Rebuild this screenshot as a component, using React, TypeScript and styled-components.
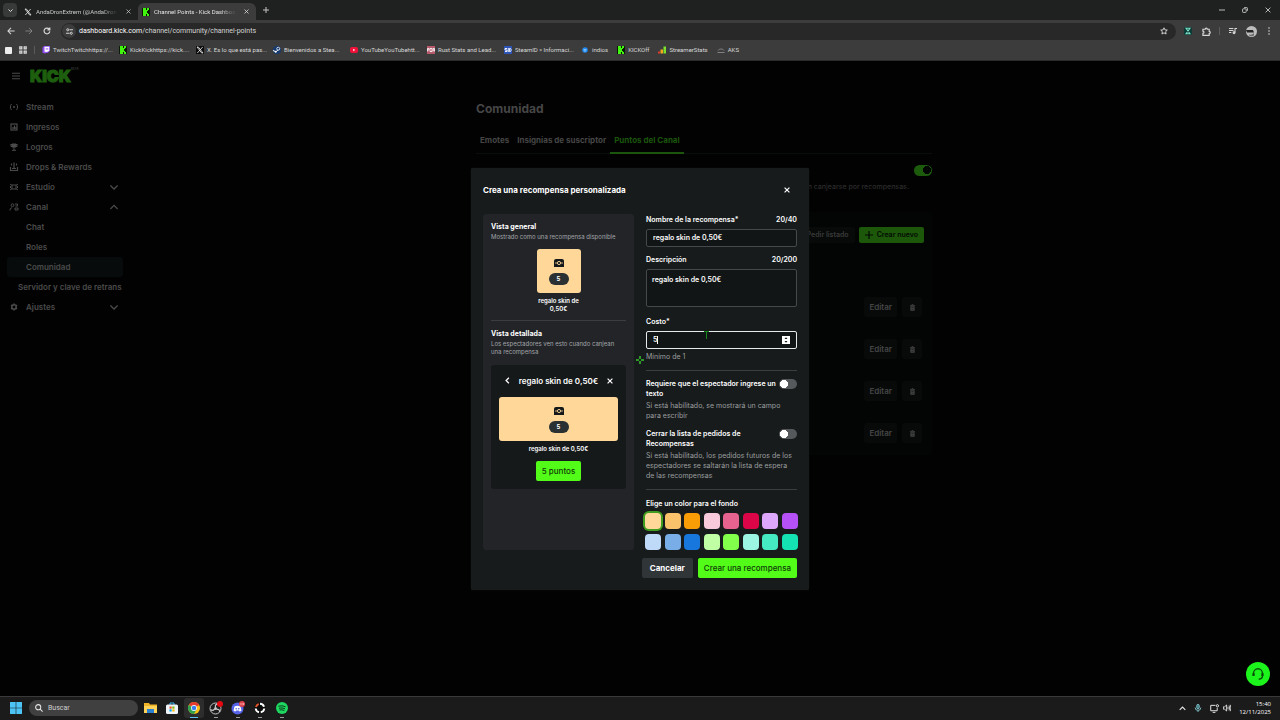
import React from "react";
import styled, { createGlobalStyle, css } from "styled-components";

const uiFont = `Roboto, "Noto Sans", sans-serif`;
const clockFont = `"Open Sans", "Noto Sans", sans-serif`;
const appFont = `Inter, "Liberation Sans", sans-serif`;

const GlobalStyle = createGlobalStyle`
  *, *::before, *::after { box-sizing: border-box; }
  body { margin: 0; background: #020202; font-family: ${appFont}; }
  button, input, textarea { font: inherit; color: inherit; }
  button { border: 0; padding: 0; background: none; cursor: pointer; }
  h1, h2, h3, p, ul { margin: 0; padding: 0; }
  ul { list-style: none; }
  a { color: inherit; text-decoration: none; }
  svg { display: block; flex: none; }
`;

const Screen = styled.div`
  display: flex;
  flex-direction: column;
  min-height: 100vh;
`;

/* ---------- Browser chrome ---------- */

const TabStrip = styled.div`
  display: flex;
  align-items: stretch;
  height: 20px;
  padding-left: 3px;
  background: #1f2120;
  font: 6px/20px ${uiFont};
  color: #c9c9c9;
`;

const TabSearch = styled.button`
  display: grid;
  place-items: center;
  width: 14px;
  height: 14px;
  margin: 3px 3px 0 0;
  border-radius: 4px;
  background: #383a39;
  color: #ddd;
`;

const Tab = styled.div<{ $active?: boolean }>`
  display: flex;
  align-items: center;
  gap: 4px;
  width: 118px;
  height: 17px;
  margin-top: 3px;
  padding: 0 4px;
  border-radius: 6px 6px 0 0;
  line-height: 14px;
  ${(p) => p.$active && css`background: #3c3c3c; color: #e4e4e4;`}
`;

const TabTitle = styled.span`
  flex: 1;
  white-space: nowrap;
  mask-image: linear-gradient(90deg, #000 80%, transparent);
`;

const IconButton = styled.button`
  display: grid;
  place-items: center;
  width: 12px;
  height: 12px;
`;

const NewTab = styled(IconButton)`
  margin: 4px 0 0 4px;
`;

const WindowControls = styled.div`
  display: flex;
  align-items: center;
  gap: 11px;
  margin-left: auto;
  padding-right: 6px;
`;

const Toolbar = styled.div`
  display: flex;
  align-items: center;
  gap: 6px;
  height: 22px;
  padding: 0 5px;
  background: #3c3c3c;
  color: #d6d6d6;
`;

const AddressBar = styled.div`
  display: flex;
  flex: 1;
  align-items: center;
  gap: 3px;
  height: 17px;
  margin-left: 2px;
  padding: 0 8px 0 1px;
  border-radius: 9px;
  background: #282828;
`;

const SiteInfo = styled.span`
  display: grid;
  place-items: center;
  width: 14px;
  height: 14px;
  border-radius: 50%;
  background: #3c3c3c;
`;

const Address = styled.a`
  flex: 1;
  font: 7px/16px ${uiFont};
  color: #d4d4d4;
  b { font-weight: 400; color: #fff; }
`;

const Separator = styled.span`
  width: 1px;
  height: 8px;
  background: #5b5b5b;
`;

const ToolbarSeparator = styled(Separator)`
  margin: 0 1px;
`;

const Bookmarks = styled.nav`
  display: flex;
  align-items: center;
  gap: 7px;
  height: 19px;
  padding: 0 0 3px 4px;
  background: #3c3c3c;
  border-bottom: 1px solid #2c2c2c;
  font: 6px/12px ${uiFont};
  color: #d8d8d8;
`;

const Bookmark = styled.a<{ $wide?: boolean }>`
  display: flex;
  align-items: center;
  gap: 3px;
  width: ${(p) => (p.$wide ? "68px" : "auto")};
  margin-right: 2px;
  white-space: nowrap;
`;

/* ---------- Dashboard behind the dialog ---------- */

const Page = styled.div`
  position: relative;
  display: flex;
  flex: 1;
  background: #020202;
`;

const Sidebar = styled.aside`
  width: 128px;
  flex: none;
  color: #4b4b4b;
`;

const Brand = styled.div`
  display: flex;
  align-items: center;
  gap: 10px;
  height: 29px;
  padding-left: 12px;
  margin-bottom: 7px;
`;

const Wordmark = styled.a`
  display: flex;
  align-items: flex-start;
  color: #1d5f0e;
  font: 900 16px/18px ${appFont};
  -webkit-text-stroke: 1px #1d5f0e;
  sup {
    font: 600 3px/5px ${appFont};
    color: #3b3b3b;
    -webkit-text-stroke: 0;
  }
`;

const NavLink = styled.a<{ $indent?: number; $active?: boolean }>`
  display: flex;
  align-items: center;
  gap: 7px;
  height: 20px;
  margin: 0 5px 0 7px;
  padding: 0 5px 0 ${(p) => p.$indent ?? 2}px;
  border-radius: 3px;
  background: ${(p) => (p.$active ? "#070b0b" : "transparent")};
  font: 600 8px/20px ${appFont};
  white-space: nowrap;
  span { flex: 1; }
`;

const Main = styled.main`
  flex: 1;
  display: flex;
  justify-content: center;
`;

const Content = styled.div`
  flex: 0 1 456px;
  padding-top: 40px;
`;

const PageTitle = styled.h1`
  font: 700 12px/16px ${appFont};
  color: #464646;
`;

const TabBar = styled.nav`
  display: flex;
  margin-top: 12px;
  border-bottom: 1px solid #0a0d0d;
`;

const SectionTab = styled.a<{ $active?: boolean }>`
  padding: 0 4px;
  margin-bottom: -1px;
  border-bottom: 2px solid ${(p) => (p.$active ? "#1c560d" : "transparent")};
  font: 700 8px/23px ${appFont};
  color: ${(p) => (p.$active ? "#1c560d" : "#464646")};
`;

const PointsRow = styled.div`
  display: flex;
  flex-direction: column;
  align-items: flex-end;
  gap: 5px;
  margin-top: 11px;
`;

const Hint = styled.p`
  padding-right: 23px;
  font: 500 7px/12px ${appFont};
  color: #2c2c2c;
`;

const Rewards = styled.section`
  display: flex;
  flex-direction: column;
  margin-top: 19px;
  padding: 15px 8px 0;
  border-radius: 4px;
  background: #030504;
  color: #464646;
`;

const RewardActions = styled.div`
  display: flex;
  justify-content: flex-end;
  gap: 4px;
  margin-bottom: 44px;
`;

const SmallButton = styled.button<{ $primary?: boolean }>`
  display: flex;
  align-items: center;
  gap: 4px;
  height: 16px;
  padding: 0 6px;
  border-radius: 2px;
  background: ${(p) => (p.$primary ? "#1c570a" : "#070a09")};
  color: ${(p) => (p.$primary ? "#030a02" : "#3a3a3a")};
  font: 600 7px/16px ${appFont};
  white-space: nowrap;
`;

const RewardRow = styled.li`
  display: flex;
  justify-content: flex-end;
  gap: 5px;
  height: 42px;
  padding: 10px 2px 12px 0;
`;

const RowButton = styled.button`
  display: grid;
  place-items: center;
  min-width: 20px;
  height: 20px;
  padding: 0 5px;
  border-radius: 3px;
  background: #080a0a;
  font: 600 8px/20px ${appFont};
`;

/* ---------- Dialog ---------- */

const Overlay = styled.div`
  position: absolute;
  inset: 0;
  display: flex;
  align-items: center;
  justify-content: center;
`;

const Dialog = styled.form`
  position: relative;
  width: 338px;
  padding: 12px;
  border-radius: 2px;
  background: #171b1c;
  color: #fff;
  box-shadow: 0 0 1px #2a2e2f;
`;

const DialogHeader = styled.header`
  display: flex;
  align-items: center;
  justify-content: space-between;
  height: 20px;
  margin-bottom: 14px;
  padding-right: 4px;
`;

const Title = styled.h2`
  font: 700 8px/12px ${appFont};
`;

const PreviewTitle = styled.h3`
  font: 700 7px/12px ${appFont};
`;

const Columns = styled.div`
  display: grid;
  grid-template-columns: 1fr 1fr;
  gap: 12px;
`;

const Preview = styled.section`
  padding: 7px 8px 8px;
  border-radius: 3px;
  background: #222428;
`;

const Caption = styled.p`
  font: 400 6px/8px ${appFont};
  color: #a2a5a8;
`;

const RewardCard = styled.div<{ $full?: boolean }>`
  display: flex;
  flex-direction: column;
  align-items: center;
  gap: 6px;
  width: ${(p) => (p.$full ? "auto" : "44px")};
  height: 44px;
  margin: ${(p) => (p.$full ? "0" : "8px auto 0")};
  padding-top: 10px;
  border-radius: 3px;
  background: #ffd899;
  color: #15181a;
`;

const CostBadge = styled.span`
  width: 20px;
  border-radius: 6px;
  background: #2b3033;
  color: #fff;
  font: 700 6px/12px ${appFont};
  text-align: center;
`;

const RewardName = styled.p<{ $full?: boolean }>`
  width: ${(p) => (p.$full ? "auto" : "48px")};
  margin: 4px auto 0;
  font: 600 6px/8px ${appFont};
  text-align: center;
`;

const Rule = styled.hr<{ $gap: number }>`
  height: 1px;
  margin: ${(p) => p.$gap}px 0;
  border: 0;
  background: #3a3e41;
`;

const Detail = styled.div`
  display: flex;
  flex-direction: column;
  margin-top: 9px;
  padding: 7px 8px 8px;
  border-radius: 3px;
  background: #16191a;
`;

const DetailHeader = styled.div`
  display: flex;
  align-items: center;
  justify-content: space-between;
  height: 18px;
  margin-bottom: 7px;
  padding: 0 2px;
  font: 600 8px/18px ${appFont};
  white-space: nowrap;
`;

const ActionButton = styled.button<{ $secondary?: boolean }>`
  height: 20px;
  padding: 0 ${(p) => (p.$secondary ? 8 : 6)}px;
  border-radius: 2px;
  background: ${(p) => (p.$secondary ? "#303537" : "#53fc18")};
  color: ${(p) => (p.$secondary ? "#fff" : "#0d3a08")};
  font: ${(p) => (p.$secondary ? 700 : 500)} 8px/20px ${appFont};
  white-space: nowrap;
`;

const Redeem = styled(ActionButton)`
  align-self: center;
  margin-top: 8px;
`;

const Fields = styled.div`
  display: flex;
  flex-direction: column;
`;

const FieldLabel = styled.label`
  display: flex;
  justify-content: space-between;
  font: 600 7px/12px ${appFont};
`;

const inputStyle = css`
  display: block;
  width: 100%;
  border: 1px solid #45494b;
  border-radius: 2px;
  outline: 0;
  background: #121516;
  color: #fff;
  font: 600 7px/12px ${appFont};
`;

const TextInput = styled.input<{ $focused?: boolean }>`
  ${inputStyle}
  height: 18px;
  padding: 0 6px;
  ${(p) => p.$focused && css`border-color: #e8eaea;`}
`;

const TextArea = styled.textarea`
  ${inputStyle}
  height: 38px;
  padding: 4px 5px;
  resize: none;
`;

const Field = styled.div<{ $space?: number }>`
  display: flex;
  flex-direction: column;
  gap: 3px;
  margin-bottom: ${(p) => p.$space ?? 0}px;
`;

const CostBox = styled.div`
  position: relative;
`;

const Caret = styled.span`
  position: absolute;
  left: 11px;
  top: 5px;
  width: 1px;
  height: 8px;
  background: #fff;
`;

const Stepper = styled.button`
  position: absolute;
  right: 7px;
  top: 5px;
`;

const HelpText = styled.p`
  font: 400 7px/10px ${appFont};
  color: #9b9e9f;
`;

const Option = styled.div`
  display: grid;
  grid-template-columns: 1fr 18px;
  row-gap: 2px;
  margin-bottom: 8px;
  label { font: 600 7px/10px ${appFont}; }
  p { grid-column: 1 / -1; }
`;

const Switch = styled.input<{ $dim?: boolean }>`
  appearance: none;
  width: 18px;
  height: 10px;
  margin: 0;
  border-radius: 5px;
  background: radial-gradient(circle at 5px 5px, #fff 0 4px, transparent 4px) #55595b;
  ${(p) => p.$dim && css`
    height: 11px;
    border-radius: 6px;
    background: radial-gradient(circle at 13px 5px, #020602 0 4px, transparent 4px) #1c5a0c;
  `}
`;

const ColorTitle = styled.p`
  margin-top: 8px;
  font: 600 7px/12px ${appFont};
`;

const Swatches = styled.div`
  display: grid;
  grid-template-columns: repeat(8, 16px);
  justify-content: space-between;
  row-gap: 5px;
  margin: 3px -1px 0;
`;

const Swatch = styled.input<{ $color: string }>`
  appearance: none;
  width: 16px;
  height: 16px;
  margin: 0;
  border-radius: 4px;
  background: ${(p) => p.$color};
  &:checked { box-shadow: 0 0 0 2px #3f9c20; }
`;

const DialogFooter = styled.footer`
  display: flex;
  justify-content: flex-end;
  gap: 5px;
  margin-top: 8px;
`;

const Marker = styled.span<{ $x: number; $y: number }>`
  position: absolute;
  left: ${(p) => p.$x}px;
  top: ${(p) => p.$y}px;
  pointer-events: none;
`;

const HelpBubble = styled.button`
  position: absolute;
  right: 10px;
  bottom: 10px;
  display: grid;
  place-items: center;
  width: 24px;
  height: 24px;
  border-radius: 50%;
  background: #1cf51c;
  color: #0b4d0b;
`;

/* ---------- Taskbar ---------- */

const Taskbar = styled.footer`
  display: flex;
  align-items: center;
  gap: 7px;
  height: 24px;
  padding: 0 9px 1px 10px;
  border-top: 1px solid #3a3a3a;
  background: #1b1b1b;
  color: #e6e6e6;
  font: 7px/9px ${uiFont};
`;

const TaskSearch = styled.label`
  display: flex;
  align-items: center;
  gap: 5px;
  width: 109px;
  height: 16px;
  padding: 0 6px;
  border-radius: 8px;
  background: #404040;
  input {
    min-width: 0;
    flex: 1;
    border: 0;
    padding: 0;
    background: none;
    &::placeholder { color: #cfcfcf; opacity: 1; }
  }
`;

const Apps = styled.div`
  display: flex;
  gap: 2px;
  margin-left: -5px;
`;

const AppButton = styled.button<{ $state?: "open" | "focus" }>`
  position: relative;
  display: grid;
  place-items: center;
  width: 20px;
  height: 20px;
  border-radius: 3px;
  background: ${(p) => (p.$state === "focus" ? "#2d2d2d" : "transparent")};
  ${(p) => p.$state && css`
    &::after {
      content: "";
      position: absolute;
      bottom: 0;
      left: 50%;
      width: ${p.$state === "focus" ? 8 : 4}px;
      height: 1px;
      transform: translateX(-50%);
      background: ${p.$state === "focus" ? "#5cc3f2" : "#9a9a9a"};
    }
  `}
`;

const Tray = styled.div`
  display: flex;
  align-items: center;
  gap: 8px;
  margin-left: auto;
`;

const TrayGroup = styled.div`
  display: flex;
  align-items: center;
  gap: 4px;
`;

const Clock = styled.time`
  text-align: right;
  font: 6px/8px ${clockFont};
  color: #fff;
`;

/* ---------- Icons ---------- */

type StrokeProps = { size?: number; width?: number; children: React.ReactNode };
const Stroke = ({ size = 8, width = 1.2, children }: StrokeProps) => (
  <svg width={size} height={size} viewBox="0 0 10 10" fill="none" stroke="currentColor" strokeWidth={width} aria-hidden="true">
    {children}
  </svg>
);

const Close = ({ size = 6, width = 1.5 }: { size?: number; width?: number }) => (
  <Stroke size={size} width={width}><path d="M1 1l8 8M9 1L1 9" /></Stroke>
);
const ChevronDown = () => <Stroke width={1.6}><path d="M.5 3L5 7.5 9.5 3" /></Stroke>;
const ChevronUp = () => <Stroke width={1.6}><path d="M.5 7.5L5 3l4.5 4.5" /></Stroke>;

const KickMark = () => (
  <svg width="8" height="8" viewBox="0 0 8 8" shapeRendering="crispEdges" aria-hidden="true">
    <rect width="8" height="8" fill="#0b1a08" />
    <g fill="#42f50f">
      <rect x="1" width="3" height="8" />
      <rect x="4" y="3" width="1" height="2" />
      <rect x="4" y="2" width="2" height="1" />
      <rect x="4" y="5" width="2" height="1" />
      <rect x="5" width="2" height="2" />
      <rect x="5" y="6" width="2" height="2" />
    </g>
  </svg>
);

const XMark = ({ boxed }: { boxed?: boolean }) => (
  <svg width="8" height="8" viewBox="0 0 24 24" aria-hidden="true">
    {boxed && <rect width="24" height="24" fill="#0c0c0c" />}
    <path d="M3 3h4l14 18h-4zM20 3L4 21" fill="none" stroke="#eee" strokeWidth="2.4" />
  </svg>
);

const Twitch = () => (
  <svg width="8" height="8" viewBox="0 0 16 16" aria-hidden="true">
    <path d="M4 0h12v10l-5 4H8l-3 2v-2H1V3z" fill="#8d4bf0" />
    <path d="M5 1.500h9.500v7.500l-2.500 2.500H9.500L7.500 13v-1.500H5z" fill="#fff" />
    <path d="M8.500 4v3.500M11.500 4v3.500" stroke="#8d4bf0" strokeWidth="1.500" />
  </svg>
);

const Steam = () => (
  <svg width="8" height="8" viewBox="0 0 16 16" aria-hidden="true">
    <circle cx="8" cy="8" r="8" fill="#16396e" />
    <path d="M0 9l6 2.500 4-4" fill="none" stroke="#fff" strokeWidth="2" />
    <circle cx="10.500" cy="5.500" r="3" fill="none" stroke="#fff" strokeWidth="1.500" />
    <circle cx="5.500" cy="11.500" r="2" fill="#fff" />
  </svg>
);

const YouTube = () => (
  <svg width="8" height="8" viewBox="0 0 16 16" aria-hidden="true">
    <rect y="2" width="16" height="12" rx="4" fill="#f1103a" />
    <path d="M6.500 5.500v5l4-2.500z" fill="#fff" />
  </svg>
);

const RustStats = () => (
  <svg width="8" height="8" viewBox="0 0 16 16" aria-hidden="true">
    <rect width="16" height="16" fill="#b5596c" />
    <path d="M1 11V5h3v3H1m5-3h4v6H6zm6 6V5h3v6M12 8h3" fill="none" stroke="#fff" strokeWidth="1.600" />
  </svg>
);

const SteamId = () => (
  <svg width="8" height="8" viewBox="0 0 16 16" aria-hidden="true">
    <rect width="16" height="16" rx="1" fill="#2d55b8" />
    <path d="M6 5H2v3h4v3H2M8.500 4v8M11 5h2l1.500 3L13 11h-2z" fill="none" stroke="#fff" strokeWidth="1.800" />
  </svg>
);

const BlueDot = () => (
  <svg width="8" height="8" viewBox="0 0 16 16" aria-hidden="true">
    <circle cx="8" cy="8" r="5.500" fill="#1f8af0" />
    <path d="M5 7.500h6M6.500 10h3" stroke="#cfe6ff" strokeWidth="1.500" />
  </svg>
);

const Bars = () => (
  <svg width="8" height="8" viewBox="0 0 16 16" aria-hidden="true">
    <rect y="11" width="4" height="4" fill="#e23b2a" />
    <rect x="5" y="7" width="5" height="8" fill="#f2a71b" />
    <rect x="11" y="1" width="5" height="14" fill="#7be12c" />
  </svg>
);

const Cap = () => (
  <svg width="8" height="8" viewBox="0 0 16 16" fill="none" stroke="#9a9a9a" strokeWidth="1.500" aria-hidden="true">
    <path d="M2 9c3-4 9-4 12 0M1 13h14" />
  </svg>
);

const Chest = () => (
  <svg width="10" height="8" viewBox="0 0 20 16" aria-hidden="true">
    <path d="M4 0h12q4 0 4 4v12H0V4q0-4 4-4z" fill="currentColor" />
    <path d="M2 8h4M14 8h4" stroke="#ffd899" strokeWidth="1.600" />
    <circle cx="10" cy="8" r="3.200" fill="none" stroke="#ffd899" strokeWidth="1.800" />
  </svg>
);

const Trash = () => (
  <svg width="5" height="7" viewBox="0 0 12 16" fill="currentColor" aria-hidden="true">
    <path d="M4 0h4v2h4v2H0V2h4zM1 5h10v11H1z" />
    <path d="M3.500 8h5M3.500 12h5" stroke="#0a0c0c" strokeWidth="1.400" />
  </svg>
);

const navIcons: Record<string, React.ReactNode> = {
  stream: <Stroke size={10} width={1}><path d="M2.500 2C1 4 1 6 2.500 8M7.500 2c1.500 2 1.500 4 0 6" /><circle cx="5" cy="5" r="1" fill="currentColor" stroke="none" /></Stroke>,
  income: <Stroke size={10} width={1.2}><rect x="2" y="2" width="6" height="6" /><path d="M4 7V5M5.500 7V3.500M7 7V5" /></Stroke>,
  trophy: <Stroke size={10} width={1}><path d="M3 2h4v3H3zM1.500 2.500h7M5 5v3M3 8.300h4" fill="currentColor" /><path d="M2 2.500v2h6v-2" /></Stroke>,
  drops: <Stroke size={10} width={1.2}><path d="M1.500 5v3.500h7V5M5 .5V6M2.500 1.500v2M7.500 1.500v2M3 6.500h4" /></Stroke>,
  studio: <Stroke size={10} width={1}><rect x="3" y="3" width="4" height="4" /><path d="M1 2l2 1.500M9 2L7 3.500M1 8l2-1.500M9 8L7 6.500M1.500 4v2M8.500 4v2" /></Stroke>,
  channel: <Stroke size={10} width={1}><circle cx="3.500" cy="3.200" r="1.400" /><path d="M1 8.500V7l2-1.500M6 2h2.500v2H6.500M6 8h3V6H6z" /></Stroke>,
  settings: <Stroke size={10} width={1.5}><circle cx="5" cy="5" r="2.200" /><path d="M5 1.500v1M5 7.500v1M2 3.200l.9.600M7.100 6.200l.9.600M2 6.800l.9-.6M7.100 3.800l.9-.6" /></Stroke>,
};

/* ---------- Data ---------- */

const bookmarks: { icon: React.ReactNode; text: string; wide?: boolean }[] = [
  { icon: <Twitch />, text: "TwitchTwitchhttps://...", wide: true },
  { icon: <KickMark />, text: "KickKickhttps://kick....", wide: true },
  { icon: <XMark boxed />, text: "X. Es lo que está pas...", wide: true },
  { icon: <Steam />, text: "Bienvenidos a Stea...", wide: true },
  { icon: <YouTube />, text: "YouTubeYouTubehtt...", wide: true },
  { icon: <RustStats />, text: "Rust Stats and Lead...", wide: true },
  { icon: <SteamId />, text: "SteamID » Informaci...", wide: true },
  { icon: <BlueDot />, text: "indios" },
  { icon: <KickMark />, text: "KICKOff" },
  { icon: <Bars />, text: "StreamerStats" },
  { icon: <Cap />, text: "AKS" },
];

const nav: { icon?: string; text: string; open?: boolean; indent?: number; active?: boolean }[] = [
  { icon: "stream", text: "Stream" },
  { icon: "income", text: "Ingresos" },
  { icon: "trophy", text: "Logros" },
  { icon: "drops", text: "Drops & Rewards" },
  { icon: "studio", text: "Estudio", open: false },
  { icon: "channel", text: "Canal", open: true },
  { text: "Chat", indent: 19 },
  { text: "Roles", indent: 19 },
  { text: "Comunidad", indent: 19, active: true },
  { text: "Servidor y clave de retrans", indent: 11 },
  { icon: "settings", text: "Ajustes", open: false },
];

const colors = [
  "#ffd899", "#fbc26c", "#f99d07", "#f8cadb", "#e6638f", "#dc0547", "#dda8fb", "#b651f8",
  "#bfd9f8", "#78ade8", "#1877dc", "#c0ffa4", "#81ff4a", "#9bf5e2", "#45e9c2", "#15e2b2",
];

const reward = "regalo skin de 0,50€";

/* ---------- Sections ---------- */

const BrowserChrome = () => (
  <header>
    <TabStrip>
      <TabSearch aria-label="Buscar pestañas"><Stroke size={5} width={2}><path d="M1 3l4 4 4-4" /></Stroke></TabSearch>
      <Tab>
        <XMark />
        <TabTitle>AndaDronExtrem (@AndaDron</TabTitle>
        <IconButton aria-label="Cerrar"><Close size={5} /></IconButton>
      </Tab>
      <Tab $active>
        <KickMark />
        <TabTitle>Channel Points - Kick Dashboa</TabTitle>
        <IconButton aria-label="Cerrar"><Close size={5} /></IconButton>
      </Tab>
      <NewTab aria-label="Nueva pestaña"><Stroke size={6} width={1.6}><path d="M5 0v10M0 5h10" /></Stroke></NewTab>
      <WindowControls>
        <IconButton aria-label="Minimizar"><Stroke size={6} width={1.5}><path d="M0 5h10" /></Stroke></IconButton>
        <IconButton aria-label="Restaurar"><Stroke size={6} width={1.5}><rect x="1" y="3" width="6" height="6" rx="1" /><path d="M3.500 1H8q1 0 1 1v4.500" /></Stroke></IconButton>
        <IconButton aria-label="Cerrar ventana"><Close /></IconButton>
      </WindowControls>
    </TabStrip>
    <Toolbar>
      <IconButton aria-label="Atrás"><Stroke width={1.3}><path d="M9.500 5H1.500M5 1.200L1.200 5 5 8.800" /></Stroke></IconButton>
      <IconButton aria-label="Adelante"><Stroke width={1}><path d="M.5 5h8M5 1.200L8.800 5 5 8.800" opacity=".5" /></Stroke></IconButton>
      <IconButton aria-label="Recargar"><Stroke width={1.5}><path d="M8.500 5.500A3.600 3.600 0 1 1 7.800 2.700M8.500.5v3h-3" /></Stroke></IconButton>
      <AddressBar>
        <SiteInfo><Stroke size={7} width={1.4}><path d="M5 2.500h5M0 7.500h5" /><circle cx="2.500" cy="2.500" r="1.500" /><circle cx="7.500" cy="7.500" r="1.500" /></Stroke></SiteInfo>
        <Address href="#"><b>dashboard.kick.com</b>/channel/community/channel-points</Address>
        <Stroke width={1.2}><path d="M5 1l1.200 2.600 2.900.3L7 5.900l.6 2.900L5 7.300 2.400 8.800 3 5.900.9 3.900l2.900-.3z" /></Stroke>
      </AddressBar>
      <IconButton aria-label="Extensión">
        <svg width="8" height="8" viewBox="0 0 10 10" aria-hidden="true"><rect width="10" height="10" rx="2" fill="#0d3b36" /><path d="M2.500 1.500h5L2.500 8.500h5z" fill="none" stroke="#7de0c8" strokeWidth="1.300" /></svg>
      </IconButton>
      <IconButton aria-label="Extensiones"><Stroke size={9} width={1.3}><path d="M1 2.500h2.500a1.200 1.200 0 0 1 2.400 0H8v2.300a1.200 1.200 0 0 1 0 2.400V9.300H1V7a1.200 1.200 0 0 0 0-2.400z" /></Stroke></IconButton>
      <ToolbarSeparator />
      <IconButton aria-label="Multimedia"><Stroke width={1.3}><path d="M0 2h5.500M0 4.500h5.500M0 7h3M7.500 7V2H10" /><circle cx="6.300" cy="7.200" r="1.200" fill="currentColor" /></Stroke></IconButton>
      <IconButton aria-label="Perfil">
        <svg width="11" height="11" viewBox="0 0 11 11" aria-hidden="true"><circle cx="5.500" cy="5.500" r="5.500" fill="#bdbdbd" /><path d="M0 4h7l1 2.500H1z" fill="#222" /><path d="M3 8.500q3 1 5-1.500v2.500q-2 1.500-5 0z" fill="#6d6d6d" /></svg>
      </IconButton>
      <IconButton aria-label="Menú"><Stroke><g fill="currentColor" stroke="none"><circle cx="5" cy="1.300" r="1" /><circle cx="5" cy="5" r="1" /><circle cx="5" cy="8.700" r="1" /></g></Stroke></IconButton>
    </Toolbar>
    <Bookmarks>
      <svg width="8" height="8" aria-hidden="true"><rect x="1" y="1" width="7" height="7" rx="1" fill="#eee" /></svg>
      <Stroke width={1.6}><path d="M1 1h2.500v2.500H1zM6.500 1H9v2.500H6.500zM1 6.500h2.500V9H1zM6.500 6.500H9V9H6.500z" /></Stroke>
      <Separator />
      {bookmarks.map((b) => (
        <Bookmark key={b.text} href="#" $wide={b.wide}>{b.icon}{b.text}</Bookmark>
      ))}
    </Bookmarks>
  </header>
);

const Dashboard = () => (
  <>
    <Sidebar>
      <Brand>
        <Stroke width={1.4}><path d="M0 1.500h10M0 5h10M0 8.500h10" /></Stroke>
        <Wordmark href="#">KICK<sup>BETA</sup></Wordmark>
      </Brand>
      <nav>
        {nav.map((n) => (
          <NavLink key={n.text} href="#" $indent={n.indent} $active={n.active}>
            {n.icon && navIcons[n.icon]}
            <span>{n.text}</span>
            {n.open === false && <ChevronDown />}
            {n.open && <ChevronUp />}
          </NavLink>
        ))}
      </nav>
    </Sidebar>
    <Main>
      <Content>
        <PageTitle>Comunidad</PageTitle>
        <TabBar>
          <SectionTab href="#">Emotes</SectionTab>
          <SectionTab href="#">Insignias de suscriptor</SectionTab>
          <SectionTab href="#" $active>Puntos del Canal</SectionTab>
        </TabBar>
        <PointsRow>
          <Switch type="checkbox" defaultChecked $dim aria-label="Puntos del Canal" />
          <Hint>pueden canjearse por recompensas.</Hint>
        </PointsRow>
        <Rewards>
          <RewardActions>
            <SmallButton>Pedir listado</SmallButton>
            <SmallButton $primary><Stroke width={1.5}><path d="M5 0v10M0 5h10" /></Stroke>Crear nuevo</SmallButton>
          </RewardActions>
          <ul>
            {[1, 2, 3, 4].map((n) => (
              <RewardRow key={n}>
                <RowButton>Editar</RowButton>
                <RowButton aria-label="Eliminar"><Trash /></RowButton>
              </RewardRow>
            ))}
          </ul>
        </Rewards>
      </Content>
    </Main>
  </>
);

const RewardDialog = () => (
  <Dialog onSubmit={(e) => e.preventDefault()}>
    <DialogHeader>
      <Title>Crea una recompensa personalizada</Title>
      <IconButton type="button" aria-label="Cerrar"><Close width={2} /></IconButton>
    </DialogHeader>
    <Columns>
      <Preview>
        <PreviewTitle>Vista general</PreviewTitle>
        <Caption>Mostrado como una recompensa disponible</Caption>
        <RewardCard><Chest /><CostBadge>5</CostBadge></RewardCard>
        <RewardName>{reward}</RewardName>
        <Rule $gap={7} />
        <PreviewTitle>Vista detallada</PreviewTitle>
        <Caption>Los espectadores ven esto cuando canjean una recompensa</Caption>
        <Detail>
          <DetailHeader>
            <IconButton type="button" aria-label="Atrás"><Stroke size={7} width={1.8}><path d="M7 1L3 5l4 4" /></Stroke></IconButton>
            {reward}
            <IconButton type="button" aria-label="Cerrar vista"><Close width={2} /></IconButton>
          </DetailHeader>
          <RewardCard $full><Chest /><CostBadge>5</CostBadge></RewardCard>
          <RewardName $full>{reward}</RewardName>
          <Redeem type="button">5 puntos</Redeem>
        </Detail>
      </Preview>
      <Fields>
        <Field $space={7}>
          <FieldLabel htmlFor="name">Nombre de la recompensa*<span>20/40</span></FieldLabel>
          <TextInput id="name" defaultValue={reward} />
        </Field>
        <Field $space={9}>
          <FieldLabel htmlFor="description">Descripción<span>20/200</span></FieldLabel>
          <TextArea id="description" defaultValue={reward} />
        </Field>
        <Field>
          <FieldLabel htmlFor="cost">Costo*</FieldLabel>
          <CostBox>
            <TextInput id="cost" inputMode="numeric" defaultValue="5" $focused />
            <Caret />
            <Stepper type="button" aria-label="Cambiar costo">
              <svg width="8" height="8" viewBox="0 0 8 8" aria-hidden="true"><rect width="8" height="8" fill="#fff" /><path d="M2.500 3L4 1.200 5.500 3zM2.500 5L4 6.800 5.500 5z" fill="#121516" /></svg>
            </Stepper>
          </CostBox>
          <HelpText>Mínimo de 1</HelpText>
        </Field>
        <Rule $gap={8} />
        <Option>
          <label htmlFor="needsText">Requiere que el espectador ingrese un texto</label>
          <Switch id="needsText" type="checkbox" />
          <HelpText>Si está habilitado, se mostrará un campo para escribir</HelpText>
        </Option>
        <Option>
          <label htmlFor="skipQueue">Cerrar la lista de pedidos de Recompensas</label>
          <Switch id="skipQueue" type="checkbox" />
          <HelpText>Si está habilitado, los pedidos futuros de los espectadores se saltarán la lista de espera de las recompensas</HelpText>
        </Option>
        <Rule $gap={0} />
        <ColorTitle id="colors">Elige un color para el fondo</ColorTitle>
        <Swatches role="radiogroup" aria-labelledby="colors">
          {colors.map((c, i) => (
            <Swatch key={c} type="radio" name="color" aria-label={c} $color={c} defaultChecked={i === 0} />
          ))}
        </Swatches>
      </Fields>
    </Columns>
    <DialogFooter>
      <ActionButton type="button" $secondary>Cancelar</ActionButton>
      <ActionButton type="submit">Crear una recompensa</ActionButton>
    </DialogFooter>
    <Marker $x={165} $y={188}>
      <svg width="8" height="8" viewBox="0 0 8 8" aria-hidden="true"><path d="M4 0v3M4 5v3M0 4h3M5 4h3" stroke="#37c42c" strokeWidth="1.500" /></svg>
    </Marker>
    <Marker $x={233} $y={163}>
      <svg width="5" height="8" viewBox="0 0 5 8" aria-hidden="true"><path d="M0 .5h5M2.500 1v7" fill="none" stroke="#14861a" /></svg>
    </Marker>
  </Dialog>
);

const WindowsTaskbar = () => (
  <Taskbar>
    <IconButton aria-label="Inicio">
      <svg width="12" height="12" viewBox="0 0 12 12" fill="#4cc4f5" aria-hidden="true"><path d="M0 0h5.700v5.700H0zM6.300 0H12v5.700H6.300zM0 6.300h5.700V12H0zM6.300 6.300H12V12H6.300z" /></svg>
    </IconButton>
    <TaskSearch>
      <Stroke width={1.3}><circle cx="4" cy="4" r="3.200" /><path d="M6.500 6.500L9.500 9.500" /></Stroke>
      <input placeholder="Buscar" aria-label="Buscar" />
    </TaskSearch>
    <Apps>
      <AppButton aria-label="Explorador de archivos">
        <svg width="13" height="12" viewBox="0 0 13 12" aria-hidden="true"><path d="M0 1h5l1 1.500h7V11H0z" fill="#f0b429" /><path d="M0 4h13v7H0z" fill="#ffd35a" /><path d="M3 7h7v4H3z" fill="#2b7fd0" /></svg>
      </AppButton>
      <AppButton aria-label="Microsoft Store">
        <svg width="12" height="12" viewBox="0 0 12 12" aria-hidden="true"><path d="M4 3V1h4v2" fill="none" stroke="#38b6f0" /><rect y="2.500" width="12" height="9.500" rx="1.500" fill="#eef3f8" /><path d="M3.500 4.500h2.200v2.200H3.500z" fill="#f25022" /><path d="M6.300 4.500h2.200v2.200H6.300z" fill="#7fba00" /><path d="M3.500 7.300h2.200v2.200H3.500z" fill="#00a4ef" /><path d="M6.300 7.300h2.200v2.200H6.300z" fill="#ffb900" /></svg>
      </AppButton>
      <AppButton $state="focus" aria-label="Chrome">
        <svg width="12" height="12" viewBox="0 0 24 24" aria-hidden="true"><circle cx="12" cy="12" r="12" fill="#fbc116" /><path d="M12 12L1.600 6A12 12 0 0 1 22.400 6z" fill="#e33b2e" /><path d="M12 12L1.600 6A12 12 0 0 0 12 24l5-9z" fill="#31a350" /><circle cx="12" cy="12" r="5.800" fill="#fff" /><circle cx="12" cy="12" r="4.500" fill="#3b7ded" /></svg>
      </AppButton>
      <AppButton $state="open" aria-label="OBS Studio">
        <svg width="14" height="14" viewBox="0 0 28 28" aria-hidden="true"><circle cx="13" cy="15" r="11" fill="#1d1d1d" stroke="#c6c6c6" strokeWidth="2" /><path d="M13 13c-1-5 1-7 4-7M15 16c5 0 7 3 6 6M11 16c-3 4-6 3-8 1" fill="none" stroke="#c6c6c6" strokeWidth="2.500" /><circle cx="13" cy="15" r="3" fill="#c6c6c6" /><circle cx="22" cy="6" r="6" fill="#e50914" /></svg>
      </AppButton>
      <AppButton $state="open" aria-label="Discord">
        <svg width="14" height="14" viewBox="0 0 28 28" aria-hidden="true"><circle cx="13" cy="15" r="12" fill="#5664ea" /><path d="M7 11q6-3 12 0l2 8q-2 2-4 2l-1-2h-6l-1 2q-2 0-4-2z" fill="#fff" /><circle cx="10.500" cy="15.500" r="1.600" fill="#5664ea" /><circle cx="15.500" cy="15.500" r="1.600" fill="#5664ea" /><circle cx="22" cy="6" r="6" fill="#e0434b" /><path d="M19 6h2M23 6h3" stroke="#fff" strokeWidth="2" /></svg>
      </AppButton>
      <AppButton $state="open" aria-label="Aplicación">
        <svg width="12" height="12" viewBox="0 0 24 24" fill="none" aria-hidden="true"><circle cx="12" cy="12" r="11" fill="#0a0a0a" /><path d="M12 3.500a8.500 8.500 0 0 1 8 6M20.500 13a8.500 8.500 0 0 1-7 7.500M10 20.500A8.500 8.500 0 0 1 3.500 13" stroke="#fff" strokeWidth="4" /><path d="M4 10a8.500 8.500 0 0 1 5.500-6" stroke="#e2582a" strokeWidth="4" /></svg>
      </AppButton>
      <AppButton $state="open" aria-label="Spotify">
        <svg width="12" height="12" viewBox="0 0 24 24" fill="none" aria-hidden="true"><circle cx="12" cy="12" r="12" fill="#1ed760" /><path d="M5 8.500q7-2.500 14 1M6 12.500q6-2 12 1M7 16q5-1.500 9.500 1" stroke="#0d3a1c" strokeWidth="2" /></svg>
      </AppButton>
    </Apps>
    <Tray>
      <Stroke size={7} width={1.6}><path d="M1 7l4-4 4 4" /></Stroke>
      <svg width="8" height="8" viewBox="0 0 10 10" fill="none" stroke="#7fc0c8" strokeWidth="1.200" aria-hidden="true"><rect x="3.500" y=".5" width="3" height="5.500" rx="1.500" fill="#3b7780" /><path d="M1.500 4.500a3.500 3.500 0 0 0 7 0M5 8v2" /></svg>
      <TrayGroup>
        <Stroke size={9} width={1.1}><path d="M6 1.500H.8v6H8V4.500M3 9.300h3" /><circle cx="8.200" cy="2" r="1.300" /></Stroke>
        <Stroke size={8} width={1.1}><path d="M.5 3.500H2L4.500 1.200v7.600L2 6.500H.5zM6 3.500q1 1.500 0 3M7.500 2q2 3 0 6M9 1q2 4 0 8" /></Stroke>
      </TrayGroup>
      <Clock>15:40<br />12/11/2025</Clock>
    </Tray>
  </Taskbar>
);

export default function App() {
  return (
    <Screen>
      <GlobalStyle />
      <BrowserChrome />
      <Page>
        <Dashboard />
        <Overlay><RewardDialog /></Overlay>
        <HelpBubble aria-label="Soporte">
          <Stroke size={14} width={1}><path d="M1.800 6V4.500a3.200 3.200 0 0 1 6.400 0V6.500Q8.200 8.500 5.500 8.700" /><path d="M1.800 4.500v2M8.200 4.500v2" strokeWidth="1.600" /></Stroke>
        </HelpBubble>
      </Page>
      <WindowsTaskbar />
    </Screen>
  );
}
